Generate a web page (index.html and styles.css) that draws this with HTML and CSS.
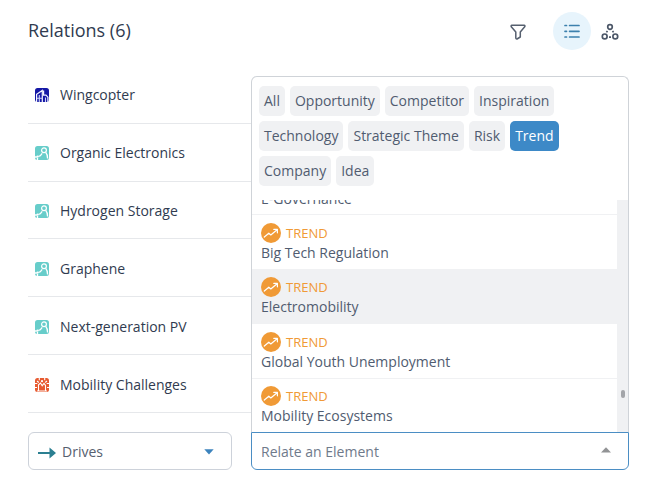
FILE: index.html
```html
<!DOCTYPE html>
<html lang="en">
<head>
<meta charset="utf-8">
<meta name="viewport" content="width=device-width, initial-scale=1">
<title>Relations</title>
<link rel="stylesheet" href="styles.css">
</head>
<body>
<svg class="sprite" aria-hidden="true">
  <symbol id="company" viewBox="0 0 14 14">
    <rect width="14" height="14" rx="2.5" fill="#1518a5"/>
    <path d="M1.6 14V6.2L7.3 2.4V14M8.6 2.6V7.2H11L12.9 9.2V14" fill="none" stroke="#f3f5ff" stroke-width="1.2"/>
    <path d="M4.3 7v7M2 10.3h5M10.5 9.5V14" fill="none" stroke="#cdd2f5" stroke-width="1.1"/>
  </symbol>
  <symbol id="technology" viewBox="0 0 14 14">
    <rect width="14" height="14" rx="2.5" fill="#67cdca"/>
    <circle cx="9" cy="4.3" r="2.4" fill="none" stroke="#fff" stroke-width="1.2"/>
    <path d="M5 10.2 7.2 7.3M10.8 6.5Q12.6 8.5 12.6 12.5M0 11h1.8M3.3 10.5 5.5 9.6M2.5 12v2" fill="none" stroke="#fff" stroke-width="1.3"/>
    <circle cx="2.5" cy="10.7" r="1.1" fill="#fff"/>
  </symbol>
  <symbol id="challenge" viewBox="0 0 14 14">
    <rect width="14" height="14" rx="2.5" fill="#e75a30"/>
    <path d="M4.3 0v2.2M9.7 0v2.2M0 5.5h2.3M11.7 5.5H14M2 3l1.8 1.5M12 3l-1.8 1.5M0 9.5h2M12 9.5h2M3.5 13V6.8l2-1.8 1.7 2.7L9 5.5l1.5 2V13M2 13h10" fill="none" stroke="#fff" stroke-width="1.1"/>
    <circle cx="7" cy="3.2" r="1.1" fill="#fff"/>
  </symbol>
  <symbol id="trend" viewBox="0 0 20 20">
    <circle cx="10" cy="10" r="10" fill="#f09a36"/>
    <path d="M3.3 14 7.8 10.2l2 1.8 6-5M12.8 6.4h3.6v3.4" fill="none" stroke="#fff" stroke-width="1.2" stroke-linejoin="round" stroke-linecap="round"/>
  </symbol>
</svg>

<main class="panel">
  <header class="header">
    <h1 class="title">Relations (6)</h1>
    <div class="tools">
      <button class="tool tool-filter" type="button" aria-label="Filter">
        <svg width="16" height="16" viewBox="0 0 16 16"><path d="M2 1.2h12q1.5.3.7 1.6L10.3 8v5L7 15q-1 .2-1.2-.8V8L1.3 2.8Q.6 1.5 2 1.2Z" fill="none" stroke="#56606f" stroke-width="1.5" stroke-linejoin="round"/></svg>
      </button>
      <button class="tool tool-active" type="button" aria-label="List view">
        <svg width="16" height="16" viewBox="0 0 16 16"><path d="M1 2.5h1.5M5.6 2.5H15M1 8.3h1.5M5.6 8.3H15M1 14h1.5M5.6 14H15" fill="none" stroke="#3c80ad" stroke-width="1.7" stroke-linecap="round"/></svg>
      </button>
      <button class="tool" type="button" aria-label="Graph view">
        <svg width="18" height="18" viewBox="0 0 18 18"><g fill="none" stroke="#4b5667" stroke-width="1.7"><circle cx="9" cy="4" r="2.3"/><circle cx="3.7" cy="13.4" r="2.4"/><circle cx="14.3" cy="13.4" r="2.4"/><path d="M6.4 7.9 5.5 9.4M11.6 7.9l.9 1.5M8 14.2h2"/></g></svg>
      </button>
    </div>
  </header>

  <ul class="relations">
    <li class="relation"><svg class="relation-icon"><use href="#company"/></svg>Wingcopter</li>
    <li class="relation"><svg class="relation-icon"><use href="#technology"/></svg>Organic Electronics</li>
    <li class="relation"><svg class="relation-icon"><use href="#technology"/></svg>Hydrogen Storage</li>
    <li class="relation"><svg class="relation-icon"><use href="#technology"/></svg>Graphene</li>
    <li class="relation"><svg class="relation-icon"><use href="#technology"/></svg>Next-generation PV</li>
    <li class="relation"><svg class="relation-icon"><use href="#challenge"/></svg>Mobility Challenges</li>
  </ul>

  <form class="relate">
    <div class="kind">
      <svg class="kind-arrow" width="18" height="12" viewBox="0 0 18 12"><path d="M0 5.1h11.5V.4L18 6l-6.5 5.6V6.9H0Z" fill="#2b7f91"/></svg>
      <select class="kind-select" aria-label="Relation type"><option>Drives</option></select>
      <svg class="kind-caret" width="10" height="6" viewBox="0 0 10 6"><path d="M.3.3h9.4L5 5.5Z" fill="#3c83bd"/></svg>
    </div>
    <div class="element">
      <input class="element-input" type="text" placeholder="Relate an Element" aria-label="Relate an Element">
      <svg class="element-caret" width="10" height="6" viewBox="0 0 10 6"><path d="M0 5.5h10L5 .3Z" fill="#929395"/></svg>
      <div class="menu">
        <div class="chips">
          <button class="chip" type="button">All</button>
          <button class="chip" type="button">Opportunity</button>
          <button class="chip" type="button">Competitor</button>
          <button class="chip" type="button">Inspiration</button>
          <button class="chip" type="button">Technology</button>
          <button class="chip" type="button">Strategic Theme</button>
          <button class="chip" type="button">Risk</button>
          <button class="chip chip-active" type="button">Trend</button>
          <button class="chip" type="button">Company</button>
          <button class="chip" type="button">Idea</button>
        </div>
        <div class="results">
          <ul class="options">
            <li class="option">E-Governance</li>
            <li class="option"><span class="tag"><svg class="tag-icon"><use href="#trend"/></svg>TREND</span>Big Tech Regulation</li>
            <li class="option option-hover"><span class="tag"><svg class="tag-icon"><use href="#trend"/></svg>TREND</span>Electromobility</li>
            <li class="option"><span class="tag"><svg class="tag-icon"><use href="#trend"/></svg>TREND</span>Global Youth Unemployment</li>
            <li class="option"><span class="tag"><svg class="tag-icon"><use href="#trend"/></svg>TREND</span>Mobility Ecosystems</li>
          </ul>
          <div class="track"><div class="thumb"></div></div>
        </div>
      </div>
    </div>
  </form>
</main>
</body>
</html>
```
FILE: styles.css
```css
* {
  box-sizing: border-box;
}

body {
  margin: 0;
  background: #fff;
  color: #303b50;
  font: 500 14px/20px "Open Sans", "Noto Sans", sans-serif;
}

button,
input,
select {
  font: inherit;
}

ul {
  margin: 0;
  padding: 0;
  list-style: none;
}

svg {
  display: block;
  flex: none;
}

.sprite {
  position: absolute;
  width: 0;
  height: 0;
}

.panel {
  padding: 12px 25px 24px 28px;
}

.header {
  display: flex;
  justify-content: space-between;
  height: 54px;
}

.title {
  margin: 6px 0 0;
  font-size: 18px;
  line-height: 24px;
  font-weight: 500;
}

.tools {
  display: flex;
  align-items: flex-start;
}

.tool {
  display: grid;
  place-items: center;
  width: 38px;
  height: 40px;
  padding: 0;
  border: 0;
  border-radius: 50%;
  background: none;
}

.tool-filter {
  margin-right: 16px;
}

.tool-active {
  height: 38px;
  background: #e7f4fc;
}

.relations {
  display: grid;
  grid-template-rows: repeat(6, 1fr);
  height: 347px;
}

.relation {
  display: flex;
  align-items: center;
  gap: 11px;
  padding: 2px 0 0 7px;
  border-bottom: 1px solid #e6e8eb;
}

.relation-icon {
  width: 14px;
  height: 14px;
}

.relate {
  display: grid;
  grid-template-columns: 204px 1fr;
  gap: 19px;
  margin-top: 19px;
}

.kind,
.element {
  position: relative;
  height: 38px;
}

.kind-select {
  width: 100%;
  height: 100%;
  padding: 2px 33px 0;
  border: 1px solid #cdd2da;
  border-radius: 6px;
  background: #fff;
  color: #56606f;
  font-weight: 400;
  appearance: none;
}

.kind-arrow {
  position: absolute;
  left: 10px;
  top: 15px;
}

.kind-caret {
  position: absolute;
  right: 18px;
  top: 17px;
}

.element-input {
  width: 100%;
  height: 100%;
  padding: 0 40px 0 9px;
  border: 1px solid #4b8ec4;
  border-radius: 0 0 6px 6px;
  outline: 0;
  background: #fff;
  color: #56606f;
  font-weight: 400;
}

.element-input::placeholder {
  color: #6f7a8b;
  opacity: 1;
}

.element-caret {
  position: absolute;
  right: 18px;
  top: 15px;
}

.menu {
  position: absolute;
  left: 0;
  right: 0;
  bottom: 100%;
  border: 1px solid #cfd3d8;
  border-bottom: 0;
  border-radius: 6px 6px 0 0;
  background: #fff;
  color: #505c70;
}

.chips {
  display: flex;
  flex-wrap: wrap;
  gap: 5px;
  padding: 9px 7px 14px;
}

.chip {
  padding: 5px;
  border: 0;
  border-radius: 5px;
  background: #f0f1f3;
  color: #505c70;
  line-height: 20px;
}

.chip-active {
  background: #3d89c7;
  color: #fff;
}

.results {
  display: flex;
  height: 232px;
}

.options {
  flex: 1;
  display: grid;
  grid-template-rows: 14px repeat(4, 1fr);
  overflow: hidden;
}

.option {
  display: flex;
  flex-direction: column;
  justify-content: flex-end;
  min-height: 0;
  padding: 0 9px 6px;
  border-top: 1px solid #f0f1f3;
}

.option:first-child {
  padding-bottom: 5px;
  border-top: 0;
}

.option-hover {
  background: #f0f1f3;
}

.tag {
  display: flex;
  align-items: center;
  gap: 5px;
  color: #f09a36;
  font-size: 13px;
}

.tag-icon {
  width: 20px;
  height: 20px;
}

.track {
  position: relative;
  width: 11px;
  background: #f0f1f3;
}

.thumb {
  position: absolute;
  left: 4px;
  bottom: 34px;
  width: 4px;
  height: 8px;
  border-radius: 2px;
  background: #a3a5a9;
}
```
